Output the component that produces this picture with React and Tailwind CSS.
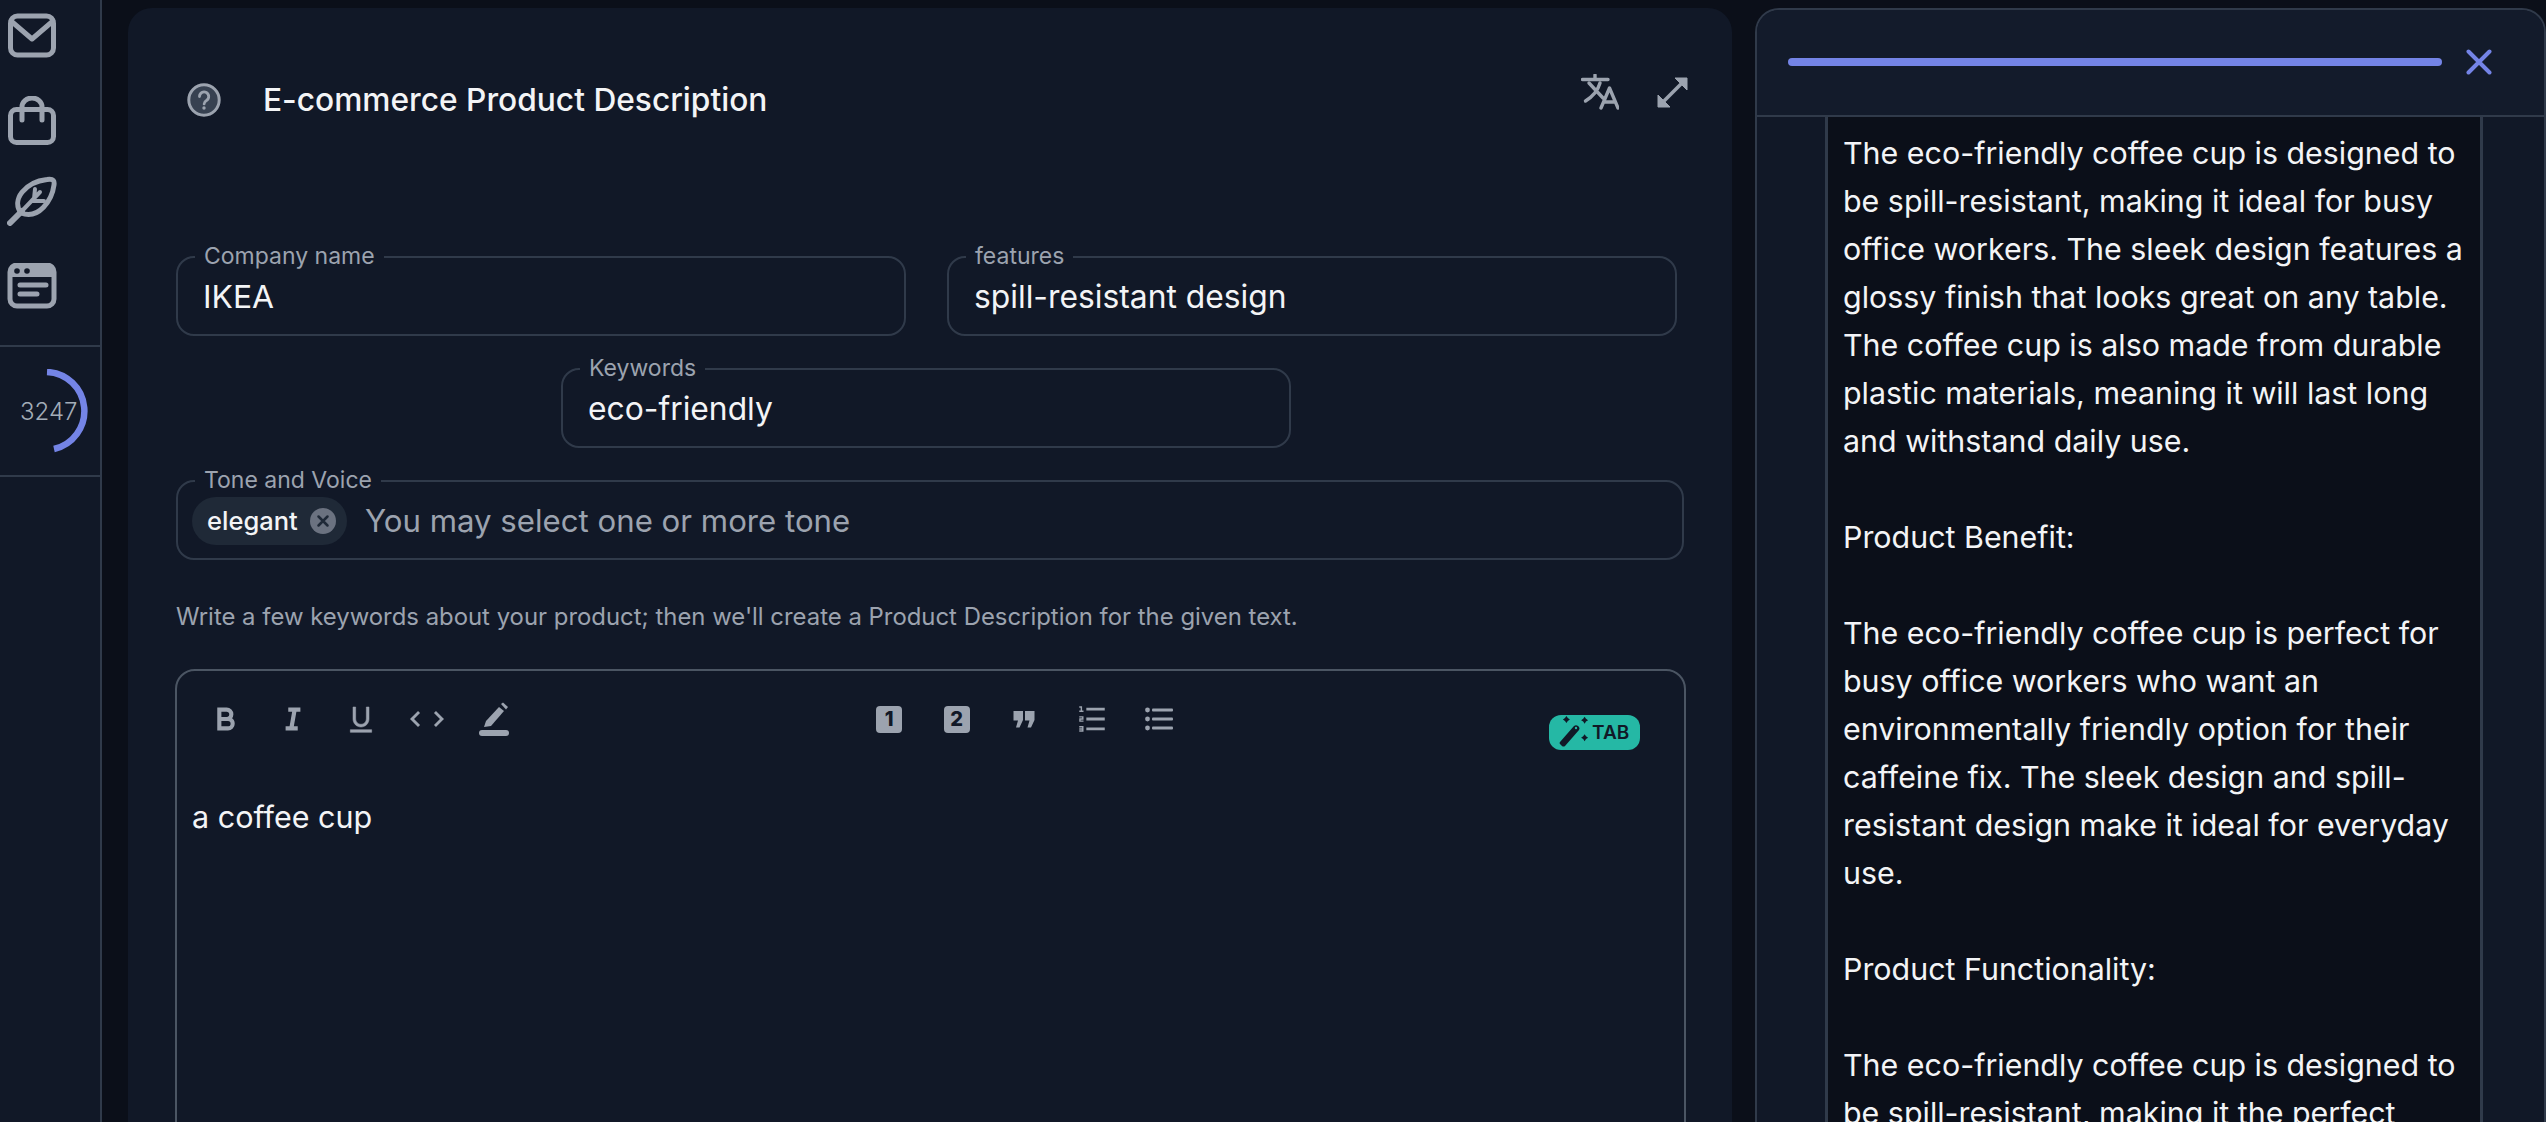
import React from "react";
import { RiBold, RiItalic, RiUnderline, RiCodeSLine, RiListOrdered } from "react-icons/ri";

function Field({ label, value, className }) {
  return (
    <div className={"relative h-[80px] rounded-[18px] border-2 border-[#303a4a] flex items-center pl-[25px] pt-[2px] " + className}>
      <span className="absolute -top-[17px] left-[17px] bg-[#111827] px-[9px] text-[23px] leading-[30px] text-[#9ca3af]">{label}</span>
      <span className="text-[31.8px] leading-[40px] text-[#f3f4f6]">{value}</span>
    </div>
  );
}

function Tool({ children }) {
  return <div className="w-[67.5px] flex items-center justify-center text-[#9ca3af]">{children}</div>;
}

function NumBox({ n }) {
  return (
    <div className="w-[26px] h-[27px] rounded-[4px] bg-[#9ca3af] flex items-center justify-center text-[20px] leading-none font-extrabold text-[#111827]">{n}</div>
  );
}

export default function App() {
  return (
    <div className="h-[1122px] w-[2546px] overflow-hidden flex bg-[#0b0f19]" style={{ fontFamily: "Inter, sans-serif" }}>
      {/* Sidebar */}
      <aside className="w-[102px] shrink-0 h-full bg-[#111827] border-r-2 border-[#303a4a] flex flex-col">
        <div className="h-[347px] pt-[12px] pl-[7px] flex flex-col border-b-2 border-[#303a4a] shrink-0">
          <svg width="50" height="48" viewBox="0 0 50 48" fill="none" stroke="#9ca3af" strokeWidth="5" strokeLinejoin="round" strokeLinecap="round">
            <rect x="3.5" y="4" width="43" height="39" rx="7" />
            <path d="M4 9 L25 27 L46 9" />
          </svg>
          <svg className="mt-[36px]" width="50" height="52" viewBox="0 0 50 52" fill="none" stroke="#9ca3af" strokeWidth="5" strokeLinejoin="round" strokeLinecap="round">
            <rect x="3.5" y="13.5" width="43" height="33" rx="6" />
            <path d="M15 24 V11 A10 9 0 0 1 35 11 V24" />
          </svg>
          <svg className="mt-[28px]" width="50" height="50" viewBox="0 0 50 50" fill="none" stroke="#9ca3af" strokeWidth="5" strokeLinejoin="round" strokeLinecap="round">
            <path d="M3 47 L15 35" strokeWidth="6" />
            <path d="M14 37 C4 24 18 6 40 3.500 C47 2.500 47.500 5 47 9 C45 24 32 44 14 37 Z" />
            <path d="M15 35 L33 16 M25 25 L37 25 M27 23 L28 13" strokeWidth="4" />
          </svg>
          <svg className="mt-[37px]" width="50" height="46" viewBox="0 0 50 46" fill="none">
            <rect x="3" y="2" width="44" height="41" rx="7" fill="none" stroke="#9ca3af" strokeWidth="5" />
            <path d="M3 9 a7 7 0 0 1 7 -7 h30 a7 7 0 0 1 7 7 v5 h-44 z" fill="#9ca3af" />
            <circle cx="10" cy="8" r="2.8" fill="#111827" />
            <circle cx="20" cy="8" r="2.8" fill="#111827" />
            <path d="M13 22 H39 M13 31 H30" stroke="#9ca3af" strokeWidth="5" strokeLinecap="round" />
          </svg>
        </div>
        <div className="h-[130px] shrink-0 border-b-2 border-[#303a4a] relative flex items-center pl-[20px]">
          <span className="text-[24px] font-light text-[#a3adb8] leading-none pt-[2px]">3247</span>
          <svg className="absolute left-[39px] top-[22px]" width="52" height="84" viewBox="0 0 52 84" fill="none">
            <path d="M8 3 A39 39 0 0 1 15 80" stroke="#7484e6" strokeWidth="6.5" />
          </svg>
        </div>
      </aside>

      <div className="w-[26px] shrink-0" />

      {/* Main card */}
      <main className="w-[1604px] shrink-0 mt-[8px] rounded-t-[24px] bg-[#111827] px-[48px] pt-[72px] overflow-hidden">
        <div className="h-[40px] flex items-center justify-between pl-[11px]">
          <div className="flex items-center gap-[42px]">
            <svg width="34" height="34" viewBox="0 0 34 34" fill="none">
              <circle cx="17" cy="17" r="15.2" fill="#374151" stroke="#9ca3af" strokeWidth="3" />
              <path d="M12.5 13.5 a4.6 4.6 0 1 1 7 4 c-1.6 1 -2.4 1.8 -2.4 3.4" stroke="#9ca3af" strokeWidth="2.8" strokeLinecap="round" />
              <circle cx="17" cy="25" r="1.7" fill="#9ca3af" />
            </svg>
            <h1 className="text-[31.7px] leading-[40px] font-medium text-[#f3f4f6]">E-commerce Product Description</h1>
          </div>
          <div className="flex items-center gap-[38px] -translate-y-[8px] -mr-[4px]">
            <svg width="38" height="36" viewBox="0 0 38 36" fill="none" stroke="#9ca3af" strokeWidth="3.4" strokeLinecap="round" strokeLinejoin="round">
              <path d="M1.5 5.5 H27 M14 1 V5.5" />
              <path d="M8 9 L22 24 M19 9 C17 16 11 23 4.500 27" />
              <path d="M20 34 L28.500 14 L37 34 M23 28 H34" />
            </svg>
            <svg width="31" height="31" viewBox="0 0 31 31" fill="none">
              <path d="M6 25 L25 6" stroke="#9ca3af" strokeWidth="3.500" />
              <path d="M18 1 H30 V13 Z M1 18 V30 H13 Z" fill="#9ca3af" stroke="#9ca3af" strokeWidth="1" strokeLinejoin="round" />
            </svg>
          </div>
        </div>

        <div className="mt-[136px] flex gap-[41px]">
          <Field label="Company name" value="IKEA" className="w-[730px]" />
          <Field label="features" value="spill-resistant design" className="w-[730px]" />
        </div>
        <div className="mt-[32px] flex justify-center pr-[8px]">
          <Field label="Keywords" value="eco-friendly" className="w-[730px]" />
        </div>

        <div className="mt-[32px] relative h-[80px] rounded-[18px] border-2 border-[#303a4a] flex items-center pl-[14px] pt-[2px]">
          <span className="absolute -top-[17px] left-[17px] bg-[#111827] px-[9px] text-[23px] leading-[30px] text-[#9ca3af]">Tone and Voice</span>
          <div className="h-[48px] w-[155px] rounded-full bg-[#1f2937] flex items-center pl-[15px]">
            <span className="text-[25.5px] font-medium text-[#f3f4f6] leading-none">elegant</span>
            <span className="ml-[12px] w-[26px] h-[26px] rounded-full bg-[#6b7280] flex items-center justify-center">
              <svg width="14" height="14" viewBox="0 0 14 14" fill="none" stroke="#1f2937" strokeWidth="2.500" strokeLinecap="round">
                <path d="M2.500 2.500 L11.500 11.500 M11.500 2.500 L2.500 11.500" />
              </svg>
            </span>
          </div>
          <span className="ml-[18px] text-[31.2px] leading-[40px] text-[#9ca3af]">You may select one or more tone</span>
        </div>

        <p className="mt-[42px] text-[23.9px] leading-[30px] text-[#9ca3af]">Write a few keywords about your product; then we'll create a Product Description for the given text.</p>

        <div className="mt-[37px] -mx-[1px] -mr-[2px] h-[600px] rounded-t-[20px] border-2 border-[#4b5563] px-[15px]">
          <div className="pt-[32px] flex items-start pr-[29px]">
            <div className="flex h-[32px]">
              <Tool><RiBold size={32} stroke="currentColor" strokeWidth={1.1} /></Tool>
              <Tool><RiItalic size={32} stroke="currentColor" strokeWidth={1.1} /></Tool>
              <Tool><RiUnderline size={32} stroke="currentColor" strokeWidth={0.4} /></Tool>
              <Tool><RiCodeSLine size={34} className="-translate-x-[1px]" /></Tool>
              <Tool>
                <svg className="-translate-x-[2px]" width="32" height="34" viewBox="0 0 32 34" fill="#9ca3af">
                  <path d="M21 5 L26 9 L13 24 L6 25 L8 19 Z" />
                  <path d="M23 2 L25 0.500 L30 5 L28 7.500 Z" />
                  <rect x="1" y="28" width="30" height="6" rx="3" />
                </svg>
              </Tool>
            </div>
            <div className="flex h-[32px] ml-[326px]">
              <Tool><NumBox n="1" /></Tool>
              <Tool><NumBox n="2" /></Tool>
              <Tool>
                <svg width="22" height="17" viewBox="0 0 22 17" fill="#9ca3af">
                  <path d="M0.500 0 H10 V9 L6.500 16.500 H3 L5 9.500 H0.500 Z" />
                  <path d="M12 0 H21.500 V9 L18 16.500 H14.500 L16.500 9.500 H12 Z" />
                </svg>
              </Tool>
              <Tool><RiListOrdered size={34} /></Tool>
              <Tool>
                <svg width="28" height="24" viewBox="0 0 28 24" fill="#9ca3af">
                  <circle cx="2.500" cy="3" r="2.400" />
                  <circle cx="2.500" cy="12" r="2.400" />
                  <circle cx="2.500" cy="21" r="2.400" />
                  <rect x="7" y="1.500" width="21" height="3" rx="1" />
                  <rect x="7" y="10.500" width="21" height="3" rx="1" />
                  <rect x="7" y="19.500" width="21" height="3" rx="1" />
                </svg>
              </Tool>
            </div>
            <div className="ml-auto mt-[12px] h-[35px] w-[91px] rounded-[12px] bg-[#25b8a5] flex items-center pl-[9px] gap-[2px] text-[#111827]">
              <svg width="32" height="32" viewBox="0 0 32 32" fill="#111827" className="shrink-0 -mt-[1px]">
                <path d="M2 26 L16 10 Q18 8.500 20 10 L21 11 Q22 12.500 21 14 L7 30 Q5.500 31 4 30 L2 28 Q1 27 2 26 Z" />
                <circle cx="18" cy="12" r="1.2" fill="#25b8a5" />
                <path d="M9 0 L11 3 L14 5 L11 7 L9 10 L7 7 L4 5 L7 3 Z" transform="scale(0.7) translate(3 0)" />
                <path d="M26 1 L28 4 L31 6 L28 8 L26 11 L24 8 L21 6 L24 4 Z" transform="scale(0.7) translate(12 0)" />
                <path d="M26 17 L28 20 L31 22 L28 24 L26 27 L24 24 L21 22 L24 20 Z" transform="scale(0.7) translate(12 9)" />
              </svg>
              <span className="text-[19px] font-semibold leading-none">TAB</span>
            </div>
          </div>
          <p className="mt-[47px] text-[30.5px] leading-[40px] text-[#f3f4f6]">a coffee cup</p>
        </div>
      </main>

      <div className="w-[23px] shrink-0" />

      {/* Right panel */}
      <section className="flex-1 min-w-0 mt-[8px] rounded-t-[24px] border-2 border-b-0 border-[#303a4a] bg-[#111827] flex flex-col overflow-hidden">
        <div className="h-[107px] shrink-0 border-b-2 border-[#303a4a] bg-[#131b2b] flex items-center pl-[31px] pb-[2px]">
          <div className="w-[654px] h-[8px] rounded-full bg-[#7484e6]" />
          <svg className="ml-[24px]" width="26" height="26" viewBox="0 0 26 26" fill="none" stroke="#7484e6" strokeWidth="4" strokeLinecap="round">
            <path d="M2.500 2.500 L23.500 23.500 M23.500 2.500 L2.500 23.500" />
          </svg>
        </div>
        <div className="flex-1 min-h-0 pl-[68px] pr-[61px]">
          <div className="h-full border-x-[3px] border-[#303a4a] bg-[#0b0f19] pl-[15px] pr-[10px] pt-[12px] text-[30.4px] leading-[48px] text-[#f3f4f6]">
            <p>The eco-friendly coffee cup is designed to be spill-resistant, making it ideal for busy office workers. The sleek design features a glossy finish that looks great on any table. The coffee cup is also made from durable plastic materials, meaning it will last long and withstand daily use.</p>
            <p className="mt-[48px]">Product Benefit:</p>
            <p className="mt-[48px]">The eco-friendly coffee cup is perfect for busy office workers who want an environmentally friendly option for their caffeine fix. The sleek design and spill-resistant design make it ideal for everyday use.</p>
            <p className="mt-[48px]">Product Functionality:</p>
            <p className="mt-[48px]">The eco-friendly coffee cup is designed to be spill-resistant, making it the perfect choice for busy office workers.</p>
          </div>
        </div>
      </section>
    </div>
  );
}
